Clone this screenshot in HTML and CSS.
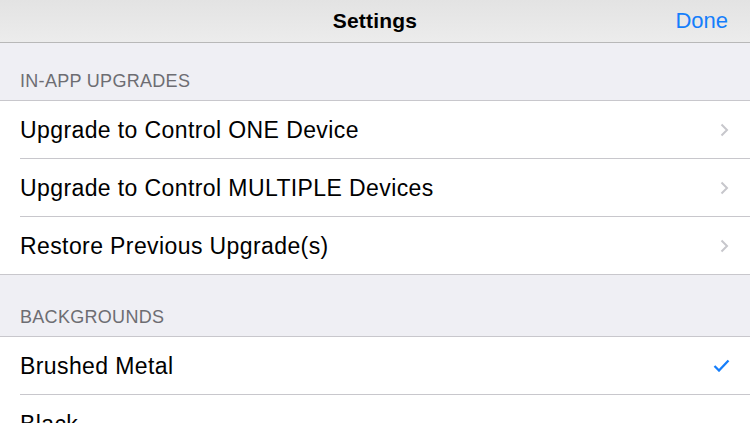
FILE: index.html
```html
<!DOCTYPE html>
<html lang="en">
<head>
  <meta charset="UTF-8">
  <title>Settings</title>
  <meta name="viewport" content="width=device-width, initial-scale=1.0">
  <link rel="stylesheet" href="styles.css">
</head>
<body>
  <div class="navbar">
    <span class="nav-title">Settings</span>
    <span class="nav-done">Done</span>
  </div>

  <div class="section-header">IN-APP UPGRADES</div>
  <div class="group">
    <div class="row">
      <span class="label">Upgrade to Control ONE Device</span>
      <svg class="chevron" width="9" height="14" viewBox="0 0 9 14"><path d="M1.5 1.5 L7 7 L1.5 12.5" fill="none" stroke="#c7c7cc" stroke-width="2"/></svg>
    </div>
    <div class="row">
      <span class="label">Upgrade to Control MULTIPLE Devices</span>
      <svg class="chevron" width="9" height="14" viewBox="0 0 9 14"><path d="M1.5 1.5 L7 7 L1.5 12.5" fill="none" stroke="#c7c7cc" stroke-width="2"/></svg>
    </div>
    <div class="row">
      <span class="label">Restore Previous Upgrade(s)</span>
      <svg class="chevron" width="9" height="14" viewBox="0 0 9 14"><path d="M1.5 1.5 L7 7 L1.5 12.5" fill="none" stroke="#c7c7cc" stroke-width="2"/></svg>
    </div>
  </div>

  <div class="section-header section-header-next">BACKGROUNDS</div>
  <div class="group">
    <div class="row">
      <span class="label">Brushed Metal</span>
      <svg class="check" width="17" height="13" viewBox="0 0 17 13"><path d="M1.5 7 L6 11.5 L15.5 1.5" fill="none" stroke="#157efb" stroke-width="2.3"/></svg>
    </div>
    <div class="row">
      <span class="label">Black</span>
    </div>
  </div>
</body>
</html>
```

FILE: styles.css
```css
body {
  margin: 0;
  padding: 0;
  height: 423px;
  background-color: #efeff4;
  font-family: "Liberation Sans", Arial, sans-serif;
  color: #000;
  overflow: hidden;
}

.navbar {
  height: 42px;
  background: linear-gradient(#e3e3e3, #ececec);
  border-bottom: 1px solid #b8b8b8;
  display: flex;
  align-items: center;
  justify-content: center;
  position: relative;
}

.nav-title {
  font-size: 21px;
  font-weight: bold;
  letter-spacing: 0.2px;
  padding-bottom: 1px;
}

.nav-done {
  position: absolute;
  right: 22px;
  top: 8px;
  font-size: 22px;
  color: #157efb;
}

.section-header {
  padding: 28px 20px 0;
  height: 29px;
  font-size: 18px;
  letter-spacing: 0.3px;
  color: #6d6d72;
}

.section-header-next {
  padding-top: 32px;
}

.group {
  background-color: #fff;
  border-top: 1px solid #c8c7cc;
  border-bottom: 1px solid #c8c7cc;
  padding-left: 20px;
}

.row {
  height: 57px;
  display: flex;
  align-items: center;
  justify-content: space-between;
  padding-right: 21px;
  border-bottom: 1px solid #c8c7cc;
}

.row:last-child {
  border-bottom: none;
}

.label {
  font-size: 23px;
  letter-spacing: 0.4px;
  padding-top: 2px;
}

.chevron {
  margin-top: 1px;
}

.check {
  margin-right: -1px;
}
```
